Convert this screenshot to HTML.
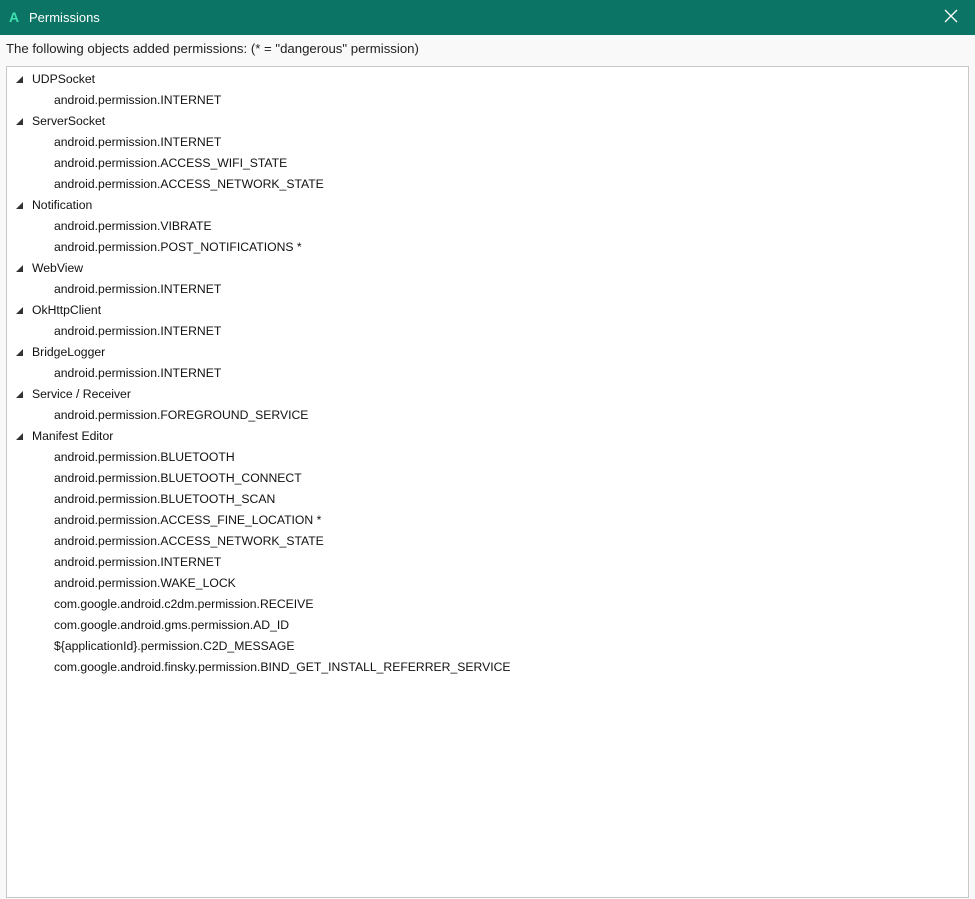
<!DOCTYPE html>
<html><head><style>
body{margin:0;width:975px;height:899px;background:#f9f9f9;font-family:"Liberation Sans",sans-serif;overflow:hidden;position:relative}
.title{position:absolute;left:0;top:0;width:975px;height:35px;background:#0b7465;color:#fff;font-size:13px}
.title .a{position:absolute;left:9px;top:9px;color:#3fe0b0;font-weight:bold;font-size:14px}
.title .t{position:absolute;left:29px;top:10px}
.title .x{position:absolute;left:943px;top:8px;width:16px;height:16px}
.hdr{position:absolute;left:6px;top:41px;font-size:13.2px;color:#222}
.box{position:absolute;left:6px;top:66px;width:961px;height:830px;background:#fff;border:1px solid #c8c8c8}
.r{position:absolute;height:21px;line-height:21px;font-size:12.2px;color:#111;white-space:nowrap}
.p{left:25px}.c{left:47px}
.tri{position:absolute;left:-16px;top:7px;width:0;height:0;border-left:7px solid transparent;border-bottom:7px solid #333}
</style></head><body>
<div class="title"><span class="a">A</span><span class="t">Permissions</span>
<svg class="x" viewBox="0 0 16 16"><path d="M2 2L14 14M14 2L2 14" stroke="#fff" stroke-width="1.3"/></svg></div>
<div class="hdr">The following objects added permissions: (* = "dangerous" permission)</div>
<div class="box" id="b"></div>
<script>
var d=[["UDPSocket",["android.permission.INTERNET"]],["ServerSocket",["android.permission.INTERNET","android.permission.ACCESS_WIFI_STATE","android.permission.ACCESS_NETWORK_STATE"]],["Notification",["android.permission.VIBRATE","android.permission.POST_NOTIFICATIONS *"]],["WebView",["android.permission.INTERNET"]],["OkHttpClient",["android.permission.INTERNET"]],["BridgeLogger",["android.permission.INTERNET"]],["Service / Receiver",["android.permission.FOREGROUND_SERVICE"]],["Manifest Editor",["android.permission.BLUETOOTH","android.permission.BLUETOOTH_CONNECT","android.permission.BLUETOOTH_SCAN","android.permission.ACCESS_FINE_LOCATION *","android.permission.ACCESS_NETWORK_STATE","android.permission.INTERNET","android.permission.WAKE_LOCK","com.google.android.c2dm.permission.RECEIVE","com.google.android.gms.permission.AD_ID","${applicationId}.permission.C2D_MESSAGE","com.google.android.finsky.permission.BIND_GET_INSTALL_REFERRER_SERVICE"]]];
var h="",y=2;
d.forEach(function(g){h+='<div class="r p" style="top:'+y+'px"><span class="tri"></span>'+g[0]+'</div>';y+=21;
g[1].forEach(function(c){h+='<div class="r c" style="top:'+y+'px">'+c+'</div>';y+=21;});});
document.getElementById("b").innerHTML=h;
</script>
</body></html>
